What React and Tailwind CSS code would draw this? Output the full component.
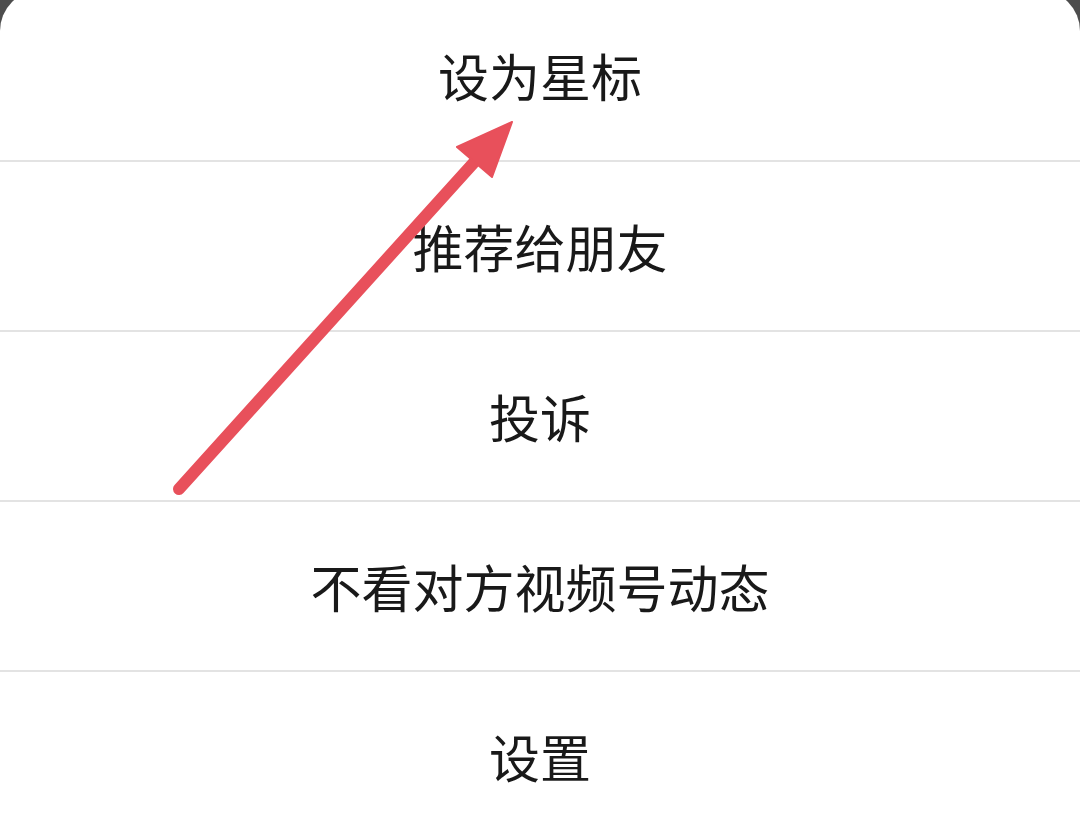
import React from "react";

const items = ["设为星标", "推荐给朋友", "投诉", "不看对方视频号动态", "设置"];

const Arrow = () => (
  <svg
    className="absolute left-0 top-0 pointer-events-none"
    width="1080"
    height="836"
    viewBox="0 0 1080 836"
  >
    <line
      x1="179"
      y1="489"
      x2="478"
      y2="158"
      stroke="#e8505b"
      strokeWidth="12"
      strokeLinecap="round"
    />
    <polygon points="512,122 457,147 492,177" fill="#e8505b" stroke="#e8505b" strokeWidth="2" strokeLinejoin="round" />
  </svg>
);

export default function App() {
  return (
    <div className="relative w-[1080px] h-[836px] overflow-hidden bg-[#4d4d4d]">
      <div
        className="-mt-[10px] rounded-t-[41px] bg-white"
        style={{ fontFamily: '"Noto Sans CJK SC", "Noto Sans", sans-serif' }}
      >
        {items.map((label, i) => (
          <div
            key={label}
            className={
              "h-[170px] flex items-center justify-center text-[51px] text-[#191919] " +
              (i > 0 ? "border-t-2 border-[#e3e3e3]" : "")
            }
          >
            {label}
          </div>
        ))}
      </div>
      <Arrow />
    </div>
  );
}
